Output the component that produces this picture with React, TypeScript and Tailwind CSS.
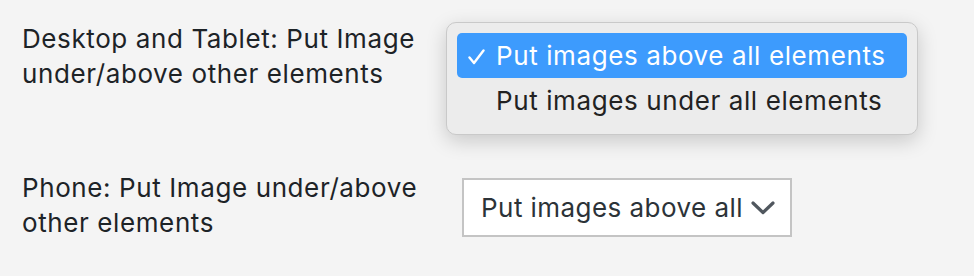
export default function App() {
  return (
    <div
      className="relative w-[974px] h-[276px] overflow-hidden bg-[#f4f4f4] text-[#1d2327]"
      style={{ fontFamily: "Inter, 'Noto Sans', sans-serif" }}
    >
      <div className="flex flex-col">
        {/* Row 1: desktop & tablet */}
        <div className="relative flex h-[150px] pl-[22px] pt-[21px]">
          <div className="w-[440px] text-[26px] leading-[35px] tracking-[0.6px]">
            Desktop and Tablet: Put Image under/above other elements
          </div>

          {/* open native dropdown */}
          <div className="absolute left-[446px] top-[22px] w-[472px] rounded-[10px] border border-[#c9c9c9] bg-[#ececec] p-[10px] shadow-[0_6px_20px_rgba(0,0,0,0.18)]">
            <div className="flex h-[45px] items-center rounded-[5px] bg-[#3d9bfd] text-white">
              <span className="w-[39px] pl-[11px] leading-none">
                <svg width="17" height="16" viewBox="0 0 17 16" className="mt-[2px]">
                  <polyline points="1.5,8.5 6,14 15.5,1.5" fill="none" stroke="white" strokeWidth="2.4" strokeLinecap="round" strokeLinejoin="round" />
                </svg>
              </span>
              <span className="text-[26px] leading-none tracking-[0.6px]">Put images above all elements</span>
            </div>
            <div className="flex h-[46px] items-center text-[#222]">
              <span className="w-[39px]" />
              <span className="text-[26px] leading-none tracking-[0.6px]">Put images under all elements</span>
            </div>
          </div>
        </div>

        {/* Row 2: phone */}
        <div className="flex pl-[22px] pt-[20px]">
          <div className="w-[440px] text-[26px] leading-[35px] tracking-[0.6px]">
            Phone: Put Image under/above other elements
          </div>
          <div className="mt-[8px] flex h-[59px] w-[330px] items-center justify-between border-2 border-[#c4c4c4] bg-white pl-[17px] pr-[15px] text-[#2c3338]">
            <span className="text-[26px] leading-none tracking-[0.45px] whitespace-nowrap">Put images above all</span>
            <svg width="24" height="14" viewBox="0 0 24 14">
              <polyline points="2,2 12,11.5 22,2" fill="none" stroke="#50575e" strokeWidth="3.2" strokeLinecap="round" strokeLinejoin="round" />
            </svg>
          </div>
        </div>
      </div>
    </div>
  );
}
